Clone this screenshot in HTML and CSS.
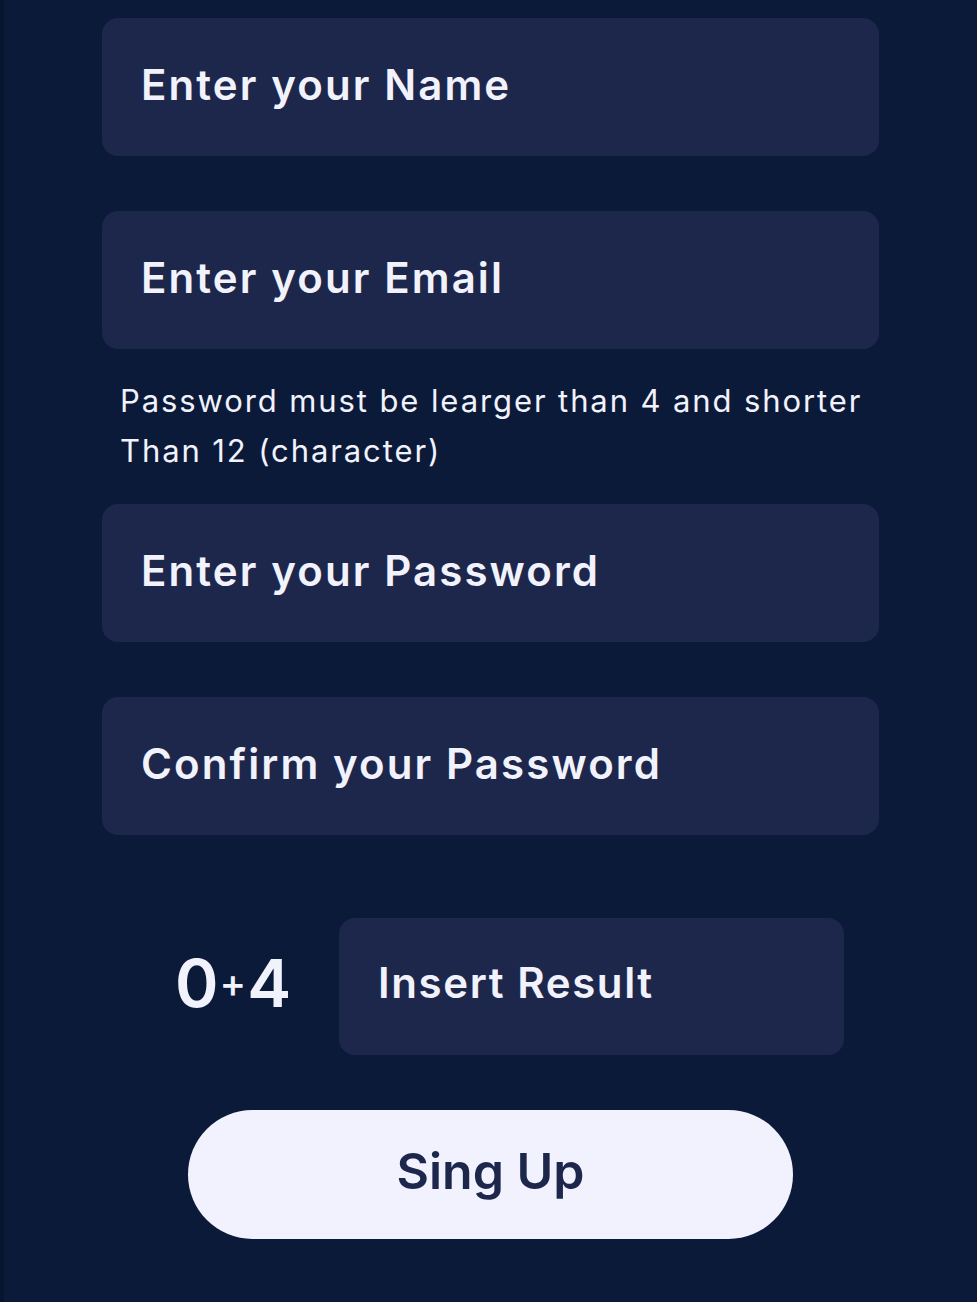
FILE: index.html
```html
<!DOCTYPE html>
<html lang="en">
<head>
<meta charset="utf-8">
<title>Sign Up</title>
<link rel="stylesheet" href="styles.css">
</head>
<body>
<main class="page">
  <form class="form">
    <div class="field"><span class="placeholder">Enter your Name</span></div>
    <div class="field field--gap"><span class="placeholder">Enter your Email</span></div>
    <p class="hint">Password must be learger than 4 and shorter<br>Than 12 (character)</p>
    <div class="field"><span class="placeholder">Enter your Password</span></div>
    <div class="field field--gap"><span class="placeholder">Confirm your Password</span></div>
    <div class="captcha">
      <div class="captcha__question">0<span class="captcha__plus">+</span>4</div>
      <div class="field captcha__field"><span class="placeholder placeholder--small">Insert Result</span></div>
    </div>
    <button type="button" class="submit">Sing Up</button>
  </form>
</main>
</body>
</html>
```

FILE: styles.css
```css
html, body {
  margin: 0;
  padding: 0;
}

body {
  background: #0b1a38;
  font-family: Inter, "Open Sans", "Liberation Sans", sans-serif;
  color: #f1f2fc;
  min-height: 1302px;
  border-left: 4px solid #081530;
  box-sizing: border-box;
}

.page {
  padding: 18px 0 0 98px;
}

.form {
  width: 777px;
  display: flex;
  flex-direction: column;
}

.field {
  height: 138px;
  background: #1d274c;
  border-radius: 16px;
  display: flex;
  align-items: center;
  padding: 0 0 6px 39px;
  box-sizing: border-box;
}

.field--gap {
  margin-top: 55px;
}

.placeholder {
  font-size: 42px;
  font-weight: 600;
  letter-spacing: 2.1px;
  color: #f1f2fc;
}

.placeholder--small {
  letter-spacing: 1.6px;
}

.hint {
  margin: 27px 0 28px 18px;
  font-size: 31px;
  line-height: 50px;
  font-weight: 400;
  letter-spacing: 1.9px;
  color: #f1f2fc;
}

.captcha {
  margin-top: 83px;
  display: flex;
  align-items: center;
  padding-left: 73px;
}

.captcha__question {
  width: 164px;
  padding-bottom: 8px;
  font-size: 66px;
  font-weight: 600;
  line-height: 1;
  color: #f1f2fc;
}

.captcha__plus {
  font-size: 40px;
  font-weight: 500;
  vertical-align: 10px;
  margin: 0 1px;
}

.captcha__field {
  width: 505px;
  height: 137px;
  padding-left: 39px;
  padding-bottom: 8px;
}

.submit {
  margin: 55px 0 0 86px;
  width: 605px;
  height: 129px;
  padding: 0 0 8px;
  border: none;
  border-radius: 65px;
  background: #f1f2fd;
  color: #1d274c;
  font-family: inherit;
  font-size: 50px;
  font-weight: 600;
  cursor: pointer;
}
```
